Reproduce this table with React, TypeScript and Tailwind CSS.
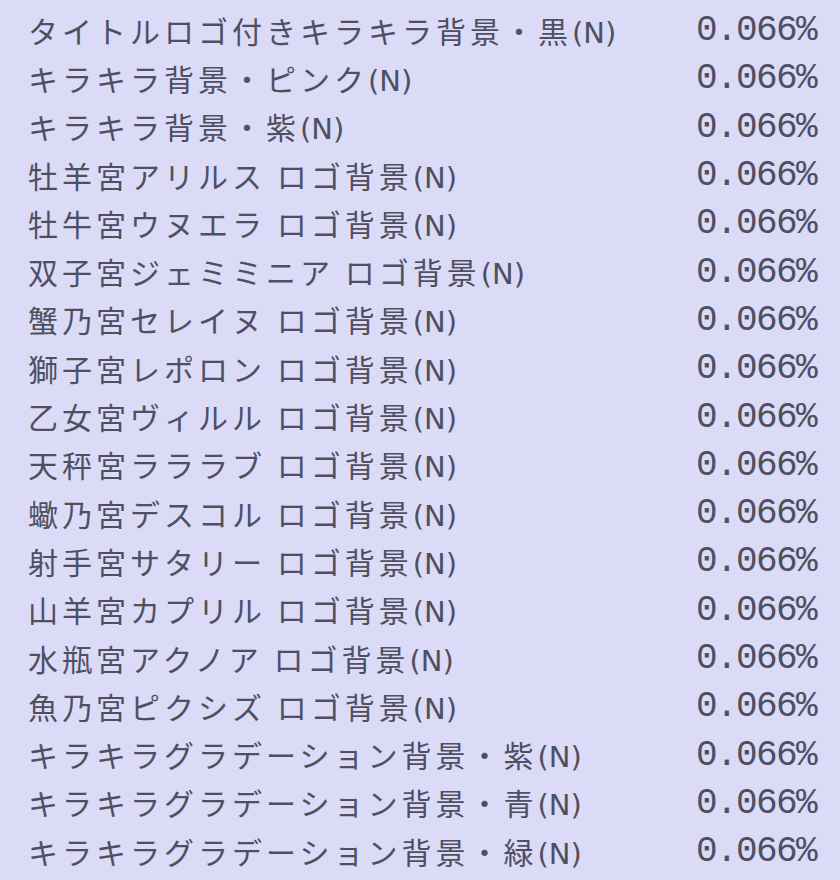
import React from "react";

const items = [
  "タイトルロゴ付きキラキラ背景・黒",
  "キラキラ背景・ピンク",
  "キラキラ背景・紫",
  "牡羊宮アリルス ロゴ背景",
  "牡牛宮ウヌエラ ロゴ背景",
  "双子宮ジェミミニア ロゴ背景",
  "蟹乃宮セレイヌ ロゴ背景",
  "獅子宮レポロン ロゴ背景",
  "乙女宮ヴィルル ロゴ背景",
  "天秤宮ラララブ ロゴ背景",
  "蠍乃宮デスコル ロゴ背景",
  "射手宮サタリー ロゴ背景",
  "山羊宮カプリル ロゴ背景",
  "水瓶宮アクノア ロゴ背景",
  "魚乃宮ピクシズ ロゴ背景",
  "キラキラグラデーション背景・紫",
  "キラキラグラデーション背景・青",
  "キラキラグラデーション背景・緑",
];

export default function App() {
  return (
    <div className="w-[840px] h-[880px] bg-[#dcdbf7] text-[#4f4f62] pt-[7px] overflow-hidden">
      {items.map((t, i) => (
        <div key={i} className="h-[48.3px] flex items-center justify-between pl-[28px] pr-[24px]">
          <span className="text-[30px] tracking-[4px] leading-none whitespace-pre font-['Noto_Sans_CJK_JP',sans-serif]">
            {t}
            <span className="tracking-[0px] text-[29px] font-['DejaVu_Sans',sans-serif]">(N)</span>
          </span>
          <span className="text-[36px] tracking-[-1.6px] leading-none font-['Liberation_Mono',monospace]">
            0.066%
          </span>
        </div>
      ))}
    </div>
  );
}
